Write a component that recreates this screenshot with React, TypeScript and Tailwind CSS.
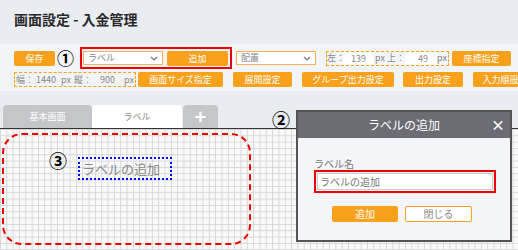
import React from "react";

const Btn = ({ w, children }: { w: string; children: React.ReactNode }) => (
  <div className={`${w} h-[15px] shrink-0 bg-[#f9a11b] rounded-[2px] text-white text-[9px] leading-[15px] text-center`}>{children}</div>
);

const Chevron = () => (
  <svg width="8" height="5" viewBox="0 0 8 5"><path d="M1 1l3 3 3-3" stroke="#777" strokeWidth="1.2" fill="none" /></svg>
);

export default function App() {
  return (
    <div className="relative w-[518px] h-[250px] overflow-hidden bg-[#e9ecf1] text-[#333] font-['Noto_Sans_CJK_JP','Noto_Sans',sans-serif]">
      <div className="h-[44px] pl-[14px] pt-[9px] text-[14px] font-bold leading-[20px] text-[#2a2a2a]">画面設定 - 入金管理</div>
      <div className="h-[47px] bg-[#f3f4f7] pl-[14px] pt-[3px] flex flex-col gap-[3px] whitespace-nowrap">
        <div className="flex items-center h-[22px]">
          <Btn w="w-[41px]">保存</Btn>
          <div className="w-[16px] ml-[2px] text-[17px] font-bold leading-[18px] text-black">①</div>
          <div className="ml-[7px] w-[152px] h-[22px] border-2 border-[#ee0000] flex items-center pl-[1px] gap-[4px] shrink-0">
            <div className="w-[80px] h-[14px] bg-white border border-[#f3b35a] flex items-center justify-between px-[4px] text-[9px] text-[#888]">
              <span>ラベル</span>
              <Chevron />
            </div>
            <Btn w="w-[61px]">追加</Btn>
          </div>
          <div className="ml-[4px] w-[80px] h-[14px] bg-white border border-[#f3b35a] flex items-center justify-between px-[4px] text-[9px] text-[#888] shrink-0">
            <span>配置</span>
            <Chevron />
          </div>
          <div className="ml-[10px] w-[123px] h-[15px] border border-dashed border-[#f9a11b] flex items-center text-[9px] text-[#888] shrink-0">
            <span className="w-[16px] shrink-0">左：</span>
            <div className="w-[31px] shrink-0 h-[13px] bg-white text-center leading-[13px]">139</div>
            <span className="w-[13px] shrink-0 pl-[1px]">px</span>
            <span className="w-[18px] shrink-0">上：</span>
            <div className="w-[32px] shrink-0 h-[13px] bg-white text-right pr-[9px] leading-[13px]">49</div>
            <span>px</span>
          </div>
          <div className="ml-[3px]"><Btn w="w-[59px]">座標指定</Btn></div>
        </div>
        <div className="flex items-center h-[15px]">
          <div className="w-[122px] h-[15px] border border-dashed border-[#f9a11b] flex items-center text-[9px] text-[#888] shrink-0 pl-[1px]">
            <span className="w-[20px] shrink-0">幅：</span>
            <span className="w-[25px] shrink-0">1440</span>
            <span className="w-[13px] shrink-0">px</span>
            <span className="w-[26px] shrink-0">縦：</span>
            <span className="w-[24px] shrink-0">900</span>
            <span>px</span>
          </div>
          <div className="ml-[2px]"><Btn w="w-[85px]">画面サイズ指定</Btn></div>
          <div className="ml-[10px]"><Btn w="w-[59px]">展開設定</Btn></div>
          <div className="ml-[10px]"><Btn w="w-[92px]">グループ出力設定</Btn></div>
          <div className="ml-[9px]"><Btn w="w-[60px]">出力設定</Btn></div>
          <div className="ml-[10px]"><Btn w="w-[64px]">入力順設定</Btn></div>
        </div>
      </div>
      <div className="h-[38px] pt-[14px] pl-[3px] flex items-end border-b border-[#333]">
        <div className="w-[89px] h-[23px] bg-[#c5c6c9] rounded-t-[4px] text-white text-[9px] leading-[23px] text-center">基本画面</div>
        <div className="w-[90px] h-[23px] bg-white rounded-t-[4px] text-[#888] text-[9px] leading-[23px] text-center">ラベル</div>
        <div className="ml-[1px] w-[35px] h-[23px] bg-[#c5c6c9] rounded-t-[4px] text-white text-[20px] font-bold leading-[22px] text-center">+</div>
      </div>
      <div className="relative h-[121px] bg-[#f9f9f9] bg-[linear-gradient(to_right,#d6d6d6_1px,transparent_1px),linear-gradient(to_bottom,#d6d6d6_1px,transparent_1px)] bg-[length:6.33px_6.33px]">
        <div className="absolute left-[2px] top-[4px] w-[249px] h-[112px] border-2 border-dashed border-[#ee0000] rounded-[20px]" />
        <div className="absolute left-[49px] top-[21px] text-[18px] font-bold leading-[20px] text-black">③</div>
        <div className="absolute left-[78px] top-[28px] w-[94px] h-[23px] border-2 border-dotted border-[#0000ff] text-[13px] leading-[19px] text-[#888] pl-[2px]">ラベルの追加</div>
      </div>
      <div className="absolute left-[272px] top-[109px] text-[18px] font-bold leading-[20px] text-black">②</div>
      <div className="absolute left-[296px] top-[110px] w-[216px] h-[132px] border-2 border-[#555] bg-[#f4f5f9] flex flex-col">
        <div className="h-[26px] bg-[#6c6c74] relative flex items-center justify-center text-white text-[12px]">
          ラベルの追加
          <span className="absolute right-[5px] top-[4px] text-[14px] font-bold leading-[16px]">×</span>
        </div>
        <div className="pl-[16px] pt-[20px] text-[10px] leading-[12px] text-[#777]">ラベル名</div>
        <div className="ml-[16px] w-[182px] h-[23px] border-2 border-[#ee0000] p-[1px]">
          <div className="h-full bg-white border border-[#ccc] text-[10px] leading-[15px] text-[#777] pl-[2px]">ラベルの追加</div>
        </div>
        <div className="mt-[13px] flex justify-center gap-[7px] pr-[4px]">
          <div className="w-[66px] h-[16px] bg-[#f9a11b] rounded-[2px] text-white text-[10px] leading-[16px] text-center">追加</div>
          <div className="w-[67px] h-[16px] bg-white border border-[#f9a11b] rounded-[2px] text-[#888] text-[10px] leading-[14px] text-center">閉じる</div>
        </div>
      </div>
    </div>
  );
}
